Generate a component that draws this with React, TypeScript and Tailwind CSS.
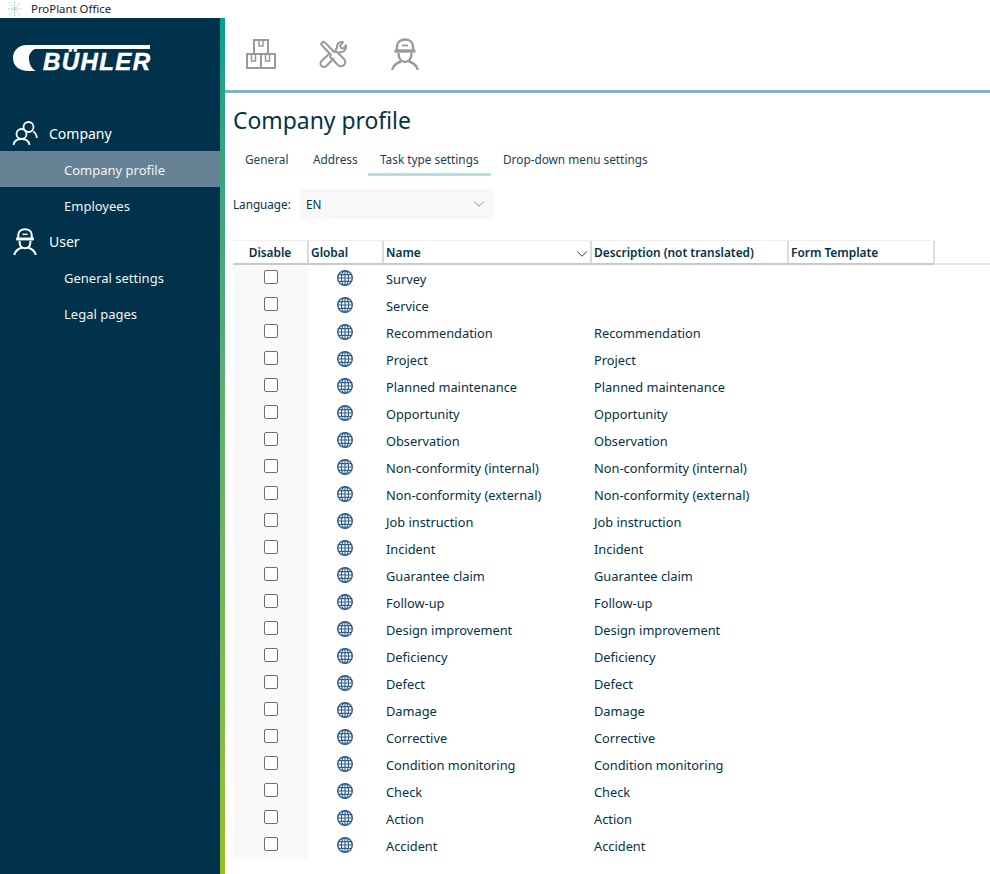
import { ChevronDown } from "lucide-react";

const rows: [string, string][] = [
  ["Survey", ""],
  ["Service", ""],
  ["Recommendation", "Recommendation"],
  ["Project", "Project"],
  ["Planned maintenance", "Planned maintenance"],
  ["Opportunity", "Opportunity"],
  ["Observation", "Observation"],
  ["Non-conformity (internal)", "Non-conformity (internal)"],
  ["Non-conformity (external)", "Non-conformity (external)"],
  ["Job instruction", "Job instruction"],
  ["Incident", "Incident"],
  ["Guarantee claim", "Guarantee claim"],
  ["Follow-up", "Follow-up"],
  ["Design improvement", "Design improvement"],
  ["Deficiency", "Deficiency"],
  ["Defect", "Defect"],
  ["Damage", "Damage"],
  ["Corrective", "Corrective"],
  ["Condition monitoring", "Condition monitoring"],
  ["Check", "Check"],
  ["Action", "Action"],
  ["Accident", "Accident"],
];

function PeopleIcon() {
  return (
    <svg width="26" height="26" viewBox="0 0 26 26" fill="none" stroke="white" strokeWidth="1.800">
      <circle cx="16.500" cy="7" r="5" />
      <circle cx="9.500" cy="14" r="5" />
      <path d="M1.500 25c.5-3.500 3.500-6 8-6s7.500 2.500 8 6" />
      <path d="M21 11.500c1.800.8 3.500 3 4 6.500" />
    </svg>
  );
}

function WorkerIcon({ color = "white", width = 24, height = 27 }: { color?: string; width?: number; height?: number }) {
  return (
    <svg width={width} height={height} viewBox="0 0 28 32" fill="none" stroke={color} strokeWidth="2.400">
      <path d="M6 12V8.500C6 4 9.500 1.500 14 1.500S22 4 22 8.500V12" />
      <path d="M3.500 13h21" strokeWidth="3.400" />
      <path d="M11 7.500h6" strokeWidth="1.800" />
      <path d="M7.500 15c0 5.500 2.500 9 6.500 9s6.500-3.500 6.500-9" />
      <path d="M1.200 32c1-4 4-7 8.800-8.500M26.800 32c-1-4-4-7-8.800-8.500" />
    </svg>
  );
}

function BoxesIcon() {
  return (
    <svg width="30" height="30" viewBox="0 0 30 30" fill="none" stroke="#9a9a9a" strokeWidth="2">
      <rect x="8" y="1" width="14" height="14" />
      <rect x="1" y="15" width="14" height="14" />
      <rect x="15" y="15" width="14" height="14" />
      <path d="M13 1v6h4V1M5.500 15v7h4v-7M19.500 15v7h4v-7" strokeWidth="1.500" />
    </svg>
  );
}

function ToolsIcon() {
  return (
    <svg width="30" height="30" viewBox="0 0 30 30" fill="none" stroke="#9a9a9a" strokeWidth="2" strokeLinejoin="round">
      <path d="M3 5l2.500-2.500 3.500 3L16 13l2-1 8 8a3.800 3.800 0 0 1-6 6l-8-8 1-2L6 8.500z" />
      <path d="M11 15l-7.500 7a3.500 3.500 0 0 0 5 5l7.500-8" />
      <path d="M17 11l2-2c-.5-4 2-6.500 6-6l-3 4 1.500 2.500L26 9l2-3c1 4-2 7.500-6 7l-2 2" />
    </svg>
  );
}

function GlobeIcon() {
  return (
    <svg width="16" height="16" viewBox="0 0 16 16" fill="none" stroke="#2f5d8c" strokeWidth="1.100">
      <circle cx="8" cy="8" r="7.300" strokeWidth="1.400" />
      <ellipse cx="8" cy="8" rx="3.600" ry="7.300" />
      <path d="M8 .7v14.600M.7 8h14.600M1.800 4.600h12.400M1.800 11.400h12.400" />
    </svg>
  );
}

function Logo() {
  return (
    <div className="relative w-[138px] h-[27px] text-white">
      <svg width="138" height="27" viewBox="0 0 138 27" fill="white" className="absolute left-0 top-0">
        <path d="M14 0H137V4H22C18 6 15.500 10 16 14C16.500 20 19 24 23 26H16C5 26 0 20 0 13C0 6 5 0 14 0Z" />
      </svg>
      <span className="absolute left-[30px] top-[4px] font-['Liberation_Sans',sans-serif] font-bold italic text-[24px] leading-[26px] tracking-[1.400px] [-webkit-text-stroke:0.5px_white]">
        BÜHLER
      </span>
    </div>
  );
}

function NavHead({ icon, label }: { icon: React.ReactNode; label: string }) {
  return (
    <div className="h-9 flex items-center pl-[12px] gap-[11px] text-white text-[14px]">
      <div className="w-[26px] flex justify-center">{icon}</div>
      <span>{label}</span>
    </div>
  );
}

function NavItem({ label, active }: { label: string; active?: boolean }) {
  return (
    <div className={`h-9 flex items-center pl-[64px] pt-[4px] text-[13px] text-[#f0f4f6] ${active ? "bg-[#678294]" : ""}`}>
      {label}
    </div>
  );
}

function Tab({ label, width, active }: { label: string; width: string; active?: boolean }) {
  return (
    <div className={`${width} h-[28px] pl-3 pb-[2px] flex items-center whitespace-nowrap text-[11.8px] text-[#1d3f54] border-b-[3px] ${active ? "border-[#b0e0e0]" : "border-transparent"}`}>
      {label}
    </div>
  );
}

function HeaderCell({ label, center, children }: { label: string; center?: boolean; children?: React.ReactNode }) {
  return (
    <div className={`relative -mr-px flex items-center px-[3px] pt-[1px] border-r-2 border-[#dcdcdc] ${center ? "justify-center" : ""}`}>
      <span>{label}</span>
      {children}
    </div>
  );
}

export default function App() {
  return (
    <div className="w-[990px] h-[874px] overflow-hidden bg-white font-['Noto_Sans',sans-serif] text-[#03324a] flex flex-col">
      <div className="h-[18px] shrink-0 flex items-center pl-[8px] gap-[10px] text-[11.4px] text-[#1a1a2e]">
        <svg width="13" height="14" viewBox="0 0 13 14" fill="none" stroke="#9cc4d0" strokeWidth="1" strokeDasharray="1.500 1">
          <path d="M1 1l11 12M12 1L1 13M6.500 0v14M0 7h13" />
        </svg>
        <span>ProPlant Office</span>
      </div>

      <div className="flex flex-1 min-h-0">
        <div className="w-[225px] shrink-0 flex">
          <div className="w-[220px] bg-[#00324b] flex flex-col">
            <div className="h-[97px] pt-[27px] pl-[13px] shrink-0">
              <Logo />
            </div>
            <NavHead icon={<PeopleIcon />} label="Company" />
            <NavItem label="Company profile" active />
            <NavItem label="Employees" />
            <NavHead icon={<WorkerIcon />} label="User" />
            <NavItem label="General settings" />
            <NavItem label="Legal pages" />
          </div>
          <div className="w-[5px] bg-gradient-to-b from-[#00a08c] to-[#95c11f]" />
        </div>

        <div className="flex-1 min-w-0 flex flex-col">
          <div className="h-[75px] shrink-0 border-b-[3px] border-[#7fb1cb] flex items-center pl-[21px] gap-[42px]">
            <BoxesIcon />
            <ToolsIcon />
            <div className="ml-px flex">
              <WorkerIcon color="#9a9a9a" width={28} height={32} />
            </div>
          </div>

          <div className="pl-[8px] flex-1">
            <h1 className="text-[22.9px] leading-[32px] mt-[12px] font-normal">Company profile</h1>

            <div className="flex mt-[11px] h-[28px]">
              <Tab label="General" width="w-[68px]" />
              <Tab label="Address" width="w-[67px]" />
              <Tab label="Task type settings" width="w-[123px]" active />
              <Tab label="Drop-down menu settings" width="w-[170px]" />
            </div>

            <div className="flex items-center mt-[13px] h-[30px] text-[11.7px]">
              <span className="w-[67px] pt-[2px]">Language:</span>
              <div className="w-[194px] h-[30px] bg-[#f8f8f8] rounded-[3px] flex items-center justify-between pl-[6px] pr-[6px]">
                <span className="pt-[2px]">EN</span>
                <ChevronDown size={18} strokeWidth={1.1} color="#6b7f8c" />
              </div>
            </div>

            <div className="mt-[21px] text-[12.8px]">
              <div className="flex h-[25px] text-[11.9px]">
                <div className="w-[701px] grid grid-cols-[75px_75px_208px_197px_146px] font-semibold border-t border-[#eeeeee] border-b-2 border-b-[#c9c9c9]">
                  <HeaderCell label="Disable" center />
                  <HeaderCell label="Global" />
                  <HeaderCell label="Name">
                    <ChevronDown size={18} strokeWidth={1.3} color="#1d3f54" className="absolute right-[-1px] top-[4px]" />
                  </HeaderCell>
                  <HeaderCell label="Description (not translated)" />
                  <HeaderCell label="Form Template" />
                </div>
                <div className="flex-1 border-b-2 border-[#e6e6e6]" />
              </div>
              <div className="pt-[1px]">
                {rows.map(([name, desc]) => (
                  <div key={name} className="h-[27px] last:h-[26px] grid grid-cols-[75px_75px_208px_197px_146px] items-stretch">
                    <div className="bg-[#f9f9f9] flex justify-center pt-[4px]">
                      <div className="w-[14px] h-[14px] border border-[#6e6e6e] rounded-[2px] bg-white" />
                    </div>
                    <div className="flex justify-center items-start pt-[4px] pr-[1px]">
                      <GlobeIcon />
                    </div>
                    <div className="px-[3px] pt-[4px] leading-[18px]">{name}</div>
                    <div className="px-[3px] pt-[4px] leading-[18px]">{desc}</div>
                    <div />
                  </div>
                ))}
              </div>
            </div>
          </div>
        </div>
      </div>
    </div>
  );
}
